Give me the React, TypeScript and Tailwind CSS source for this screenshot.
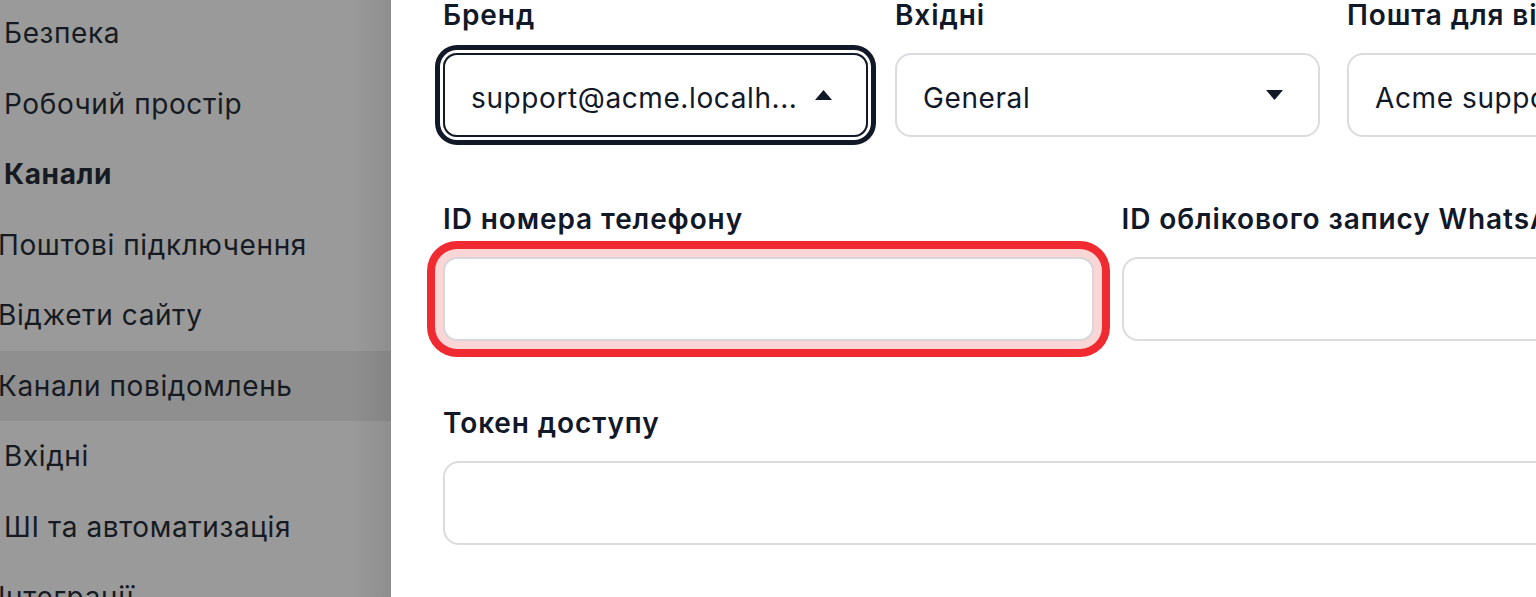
const sideItems: { label: string; bold?: boolean; shift?: boolean; active?: boolean }[] = [
  { label: "Безпека" },
  { label: "Робочий простір" },
  { label: "Канали", bold: true },
  { label: "Поштові підключення", shift: true },
  { label: "Віджети сайту", shift: true },
  { label: "Канали повідомлень", shift: true, active: true },
  { label: "Вхідні" },
  { label: "ШІ та автоматизація" },
  { label: "Інтеграції", shift: true },
];

function Caret({ up }: { up?: boolean }) {
  return (
    <svg width="17" height="10" viewBox="0 0 17 10" className="shrink-0">
      {up ? <polygon points="0,10 17,10 8.5,0" fill="#111827" /> : <polygon points="0,0 17,0 8.5,10" fill="#111827" />}
    </svg>
  );
}

function Label({ children }: { children: string }) {
  return (
    <div className="h-[40px] leading-[40px] text-[28px] font-semibold text-[#111827] whitespace-nowrap mb-[18px] tracking-[0.9px]">
      {children}
    </div>
  );
}

export default function App() {
  return (
    <div
      className="flex w-[1536px] h-[597px] overflow-hidden bg-white"
      style={{ fontFamily: "Inter, 'Noto Sans', sans-serif" }}
    >
      <aside className="relative w-[391px] shrink-0 bg-[#9a9a9a] overflow-hidden">
        <div className="mt-[-2px]">
          {sideItems.map((it) => (
            <div
              key={it.label}
              className={`h-[70.5px] flex items-center text-[28px] tracking-[0.6px] text-[#161a22] whitespace-nowrap ${
                it.active ? "bg-[#8f8f8f]" : ""
              } ${it.bold ? "font-bold" : "font-normal"} ${it.shift ? "pl-0 -ml-[2px]" : "pl-[4px]"}`}
            >
              {it.label}
            </div>
          ))}
        </div>
        <div className="absolute top-0 right-0 h-full w-[40px] bg-gradient-to-r from-transparent to-[rgba(0,0,0,0.08)]" />
      </aside>

      <main className="flex-1 overflow-hidden pl-[52px]">
        <div className="w-[1329px] mt-[-5px] flex flex-col gap-[62px]">
          <div className="grid grid-cols-3 gap-[27px]">
            <div>
              <Label>Бренд</Label>
              <div className="h-[84px] rounded-[14px] border-2 border-[#111827] shadow-[0_0_0_3px_#ffffff,0_0_0_8px_#111827] flex items-center justify-between pl-[26px] pr-[34px]">
                <span className="pt-[5px] text-[28px] tracking-[0.6px] text-[#111827] whitespace-nowrap">support@acme.localh...</span>
                <Caret up />
              </div>
            </div>
            <div>
              <Label>Вхідні</Label>
              <div className="h-[84px] rounded-[16px] border-2 border-[#dcdce0] flex items-center justify-between pl-[26px] pr-[35px]">
                <span className="pt-[5px] text-[28px] tracking-[0.6px] text-[#111827]">General</span>
                <Caret />
              </div>
            </div>
            <div>
              <Label>Пошта для відповідей</Label>
              <div className="h-[84px] rounded-[16px] border-2 border-[#dcdce0] flex items-center pl-[26px]">
                <span className="pt-[5px] text-[28px] tracking-[0.6px] text-[#111827] whitespace-nowrap">Acme support</span>
              </div>
            </div>
          </div>

          <div className="grid grid-cols-2 gap-[28px]">
            <div>
              <Label>ID номера телефону</Label>
              <div className="h-[84px] rounded-[14px] border-2 border-[#d6d6db] bg-white shadow-[0_0_0_8px_#fbd6d6,0_0_0_16px_#ef2a30]" />
            </div>
            <div>
              <Label>ID облікового запису WhatsApp Business</Label>
              <div className="h-[84px] rounded-[16px] border-2 border-[#dcdce0]" />
            </div>
          </div>

          <div>
            <Label>Токен доступу</Label>
            <div className="h-[84px] rounded-[16px] border-2 border-[#dcdce0]" />
          </div>
        </div>
      </main>
    </div>
  );
}
